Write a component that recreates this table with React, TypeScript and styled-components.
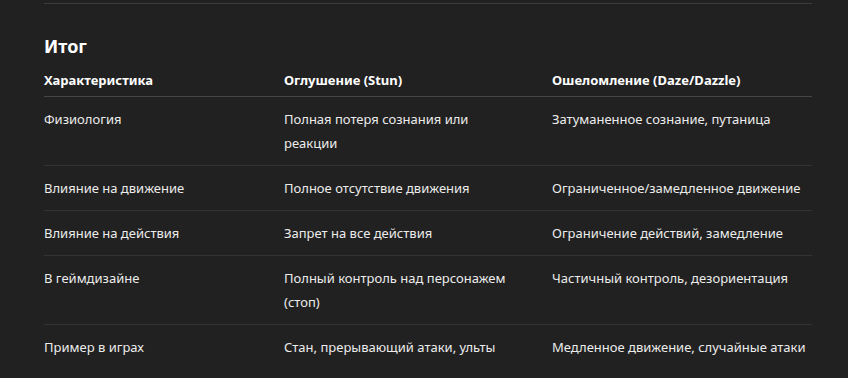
import styled, { createGlobalStyle } from "styled-components";

const rows = [
  ["Физиология", "Полная потеря сознания или реакции", "Затуманенное сознание, путаница"],
  ["Влияние на движение", "Полное отсутствие движения", "Ограниченное/замедленное движение"],
  ["Влияние на действия", "Запрет на все действия", "Ограничение действий, замедление"],
  ["В геймдизайне", "Полный контроль над персонажем (стоп)", "Частичный контроль, дезориентация"],
  ["Пример в играх", "Стан, прерывающий атаки, ульты", "Медленное движение, случайные атаки"],
];

export default function App() {
  return (
    <>
      <GlobalStyle />
      <StyledPage>
        <StyledDivider />
        <StyledHeading>Итог</StyledHeading>
        <StyledTable>
          <colgroup>
            <col style={{ width: 240 }} />
            <col style={{ width: 268 }} />
            <col style={{ width: 260 }} />
          </colgroup>
          <thead>
            <tr>
              <StyledHead>Характеристика</StyledHead>
              <StyledHead>Оглушение (Stun)</StyledHead>
              <StyledHead>Ошеломление (Daze/Dazzle)</StyledHead>
            </tr>
          </thead>
          <tbody>
            {rows.map((row, i) => (
              <StyledRow key={i} $last={i === rows.length - 1}>
                {row.map((cell) => (
                  <StyledCell key={cell}>{cell}</StyledCell>
                ))}
              </StyledRow>
            ))}
          </tbody>
        </StyledTable>
      </StyledPage>
    </>
  );
}

const GlobalStyle = createGlobalStyle`
  html, body {
    margin: 0;
    background: #212121;
  }
  body {
    font-family: "Noto Sans", "Open Sans", sans-serif;
    color: #ececec;
  }
`;

const StyledPage = styled.div`
  width: 768px;
  padding: 3px 0 0 44px;
`;

const StyledDivider = styled.div`
  border-top: 1px solid #3c3c3c;
`;

const StyledHeading = styled.h3`
  margin: 28px 0 8px;
  font-size: 18px;
  line-height: 28px;
  font-weight: 700;
  color: #fff;
`;

const StyledTable = styled.table`
  width: 768px;
  border-collapse: collapse;
  table-layout: fixed;
  font-size: 13px;
  line-height: 24px;
`;

const StyledHead = styled.th`
  text-align: left;
  font-weight: 700;
  color: #fff;
  padding: 0 8px 4px 0;
  border-bottom: 1px solid #464646;
`;

const StyledRow = styled.tr<{ $last: boolean }>`
  border-bottom: ${(p) => (p.$last ? "none" : "1px solid #333")};
`;

const StyledCell = styled.td`
  vertical-align: top;
  padding: 10px 8px 10px 0;

  &:nth-child(2) {
    padding-right: 36px;
  }

  &:last-child {
    padding-right: 0;
  }
`;
